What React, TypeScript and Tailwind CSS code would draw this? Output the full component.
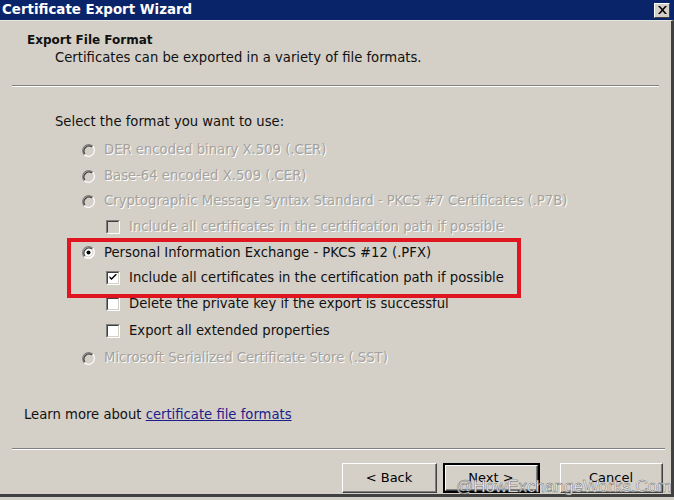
import React from 'react';

const FONT = 'font-["Tahoma","DejaVu_Sans",sans-serif]';

function Radio({ checked = false, disabled = false }: { checked?: boolean; disabled?: boolean }) {
  return (
    <svg width="13" height="13" viewBox="0 0 13 13" className="shrink-0">
      <circle cx="6.5" cy="6.5" r="5.5" fill={disabled ? '#d4d0c8' : '#ffffff'} />
      <path d="M2.26 10.74 A6 6 0 0 1 10.74 2.26" fill="none" stroke="#808080" strokeWidth="1.2" />
      <path d="M10.74 2.26 A6 6 0 0 1 2.26 10.74" fill="none" stroke="#ffffff" strokeWidth="1.2" />
      <path d="M3.0 10.0 A5 5 0 0 1 10.0 3.0" fill="none" stroke="#404040" strokeWidth="1.2" />
      <path d="M10.0 3.0 A5 5 0 0 1 3.0 10.0" fill="none" stroke="#d4d0c8" strokeWidth="1" />
      {checked && <circle cx="6.5" cy="6.5" r="2" fill="#000000" />}
    </svg>
  );
}

function Checkbox({ checked = false, disabled = false }: { checked?: boolean; disabled?: boolean }) {
  return (
    <div className="w-[14px] h-[14px] shrink-0 border-t border-l border-t-[#808080] border-l-[#808080] border-b border-r border-b-white border-r-white">
      <div
        className={`w-full h-full border-t border-l border-t-[#404040] border-l-[#404040] border-b border-r border-b-[#d4d0c8] border-r-[#d4d0c8] flex items-center justify-center ${
          disabled ? 'bg-[#d4d0c8]' : 'bg-white'
        }`}
      >
        {checked && (
          <svg width="8" height="7" viewBox="0 0 7 7">
            <path d="M0 2 L0 4 L2 6 L7 1 L7 -1 L2 4 Z" fill="#000000" />
          </svg>
        )}
      </div>
    </div>
  );
}

function Button({ label, isDefault = false }: { label: string; isDefault?: boolean }) {
  return (
    <div className={`h-[30px] ${isDefault ? 'border-2 border-black' : ''}`}>
      <div className="h-full border-t border-l border-t-white border-l-white border-b border-r border-b-[#404040] border-r-[#404040]">
        <div className="h-full flex items-center justify-center border-b border-r border-b-[#808080] border-r-[#808080] text-[13px] text-black">
          {label}
        </div>
      </div>
    </div>
  );
}

const disabledText = 'text-[#a4a29d] [text-shadow:1px_1px_0_#ffffff]';

export default function App() {
  return (
    <div className={`w-[674px] h-[500px] bg-[#d4d0c8] relative overflow-hidden ${FONT}`}>
      {/* Title bar */}
      <div className="h-[20px] bg-[#0a246a] flex items-center justify-between pl-[2px] pr-[4px]">
        <span className="text-white font-bold text-[13.4px] leading-none">Certificate Export Wizard</span>
        <div className="w-[16px] h-[15px] bg-[#d4d0c8] border-t border-l border-t-white border-l-white border-b border-r border-b-[#404040] border-r-[#404040] flex items-center justify-center">
          <svg width="9" height="8" viewBox="0 0 9 8">
            <path d="M0 0 L2 0 L4.5 2.7 L7 0 L9 0 L5.5 4 L9 8 L7 8 L4.5 5.3 L2 8 L0 8 L3.5 4 Z" fill="#000000" />
          </svg>
        </div>
      </div>

      {/* Window body */}
      <div className="h-[477px] border-r-[3px] border-r-[#404040] border-b-[3px] border-b-[#404040] border-t border-t-[#e8e6e0]">
        {/* Header */}
        <div className="pt-[11px] pl-[27px] text-[13.2px] leading-[16px] text-[#111]">
          <div className="font-bold text-[12px]">Export File Format</div>
          <div className="pl-[28px] pt-[2px]">Certificates can be exported in a variety of file formats.</div>
        </div>
        <div className="mx-[12px] mt-[19px] border-t border-t-[#808080] border-b border-b-white" />

        {/* Content */}
        <div className="pl-[55px] text-[13.2px] text-[#111]">
          <div className="mt-[27px] leading-[16px]">Select the format you want to use:</div>

          <div className="mt-[7px] pl-[27px]">
            <div className="h-[26px] flex items-center gap-[9px]">
              <Radio disabled />
              <span className={disabledText}>DER encoded binary X.509 (.CER)</span>
            </div>
            <div className="h-[26px] flex items-center gap-[9px]">
              <Radio disabled />
              <span className={disabledText}>Base-64 encoded X.509 (.CER)</span>
            </div>
            <div className="h-[24px] flex items-center gap-[9px]">
              <Radio disabled />
              <span className={disabledText}>Cryptographic Message Syntax Standard - PKCS #7 Certificates (.P7B)</span>
            </div>
            <div className="h-[28px] flex items-center gap-[9px] pl-[24px]">
              <Checkbox disabled />
              <span className={disabledText}>Include all certificates in the certification path if possible</span>
            </div>
            <div className="h-[23px] flex items-center gap-[9px]">
              <Radio checked />
              <span>Personal Information Exchange - PKCS #12 (.PFX)</span>
            </div>
            <div className="h-[27px] flex items-center gap-[9px] pl-[24px]">
              <Checkbox checked />
              <span>Include all certificates in the certification path if possible</span>
            </div>
            <div className="h-[26px] flex items-center gap-[9px] pl-[24px]">
              <Checkbox />
              <span>Delete the private key if the export is successful</span>
            </div>
            <div className="h-[28px] flex items-center gap-[9px] pl-[24px]">
              <Checkbox />
              <span>Export all extended properties</span>
            </div>
            <div className="h-[26px] flex items-center gap-[9px]">
              <Radio disabled />
              <span className={disabledText}>Microsoft Serialized Certificate Store (.SST)</span>
            </div>
          </div>
        </div>

        <div className="mt-[36px] pl-[24px] text-[13.2px] leading-[16px] text-[#111]">
          Learn more about{' '}
          <span className="text-[#1c1c8a] underline">certificate file formats</span>
        </div>

        <div className="ml-[12px] mr-[6px] mt-[25px] border-t border-t-[#808080] border-b border-b-white" />

        {/* Buttons */}
        <div className="mt-[13px] flex pl-[342px]">
          <div className="w-[95px]">
            <Button label="< Back" />
          </div>
          <div className="w-[97px] ml-[6px]">
            <Button label="Next >" isDefault />
          </div>
          <div className="w-[103px] ml-[20px]">
            <Button label="Cancel" />
          </div>
        </div>
      </div>

      {/* Red annotation box */}
      <div className="absolute left-[67px] top-[238px] w-[454px] h-[60px] border-4 border-[#e1151f]" />

      {/* Watermark */}
      <div className='absolute left-[456px] top-[477px] w-[212px] whitespace-nowrap text-[17px] leading-[20px] text-white font-["Liberation_Sans",Arial,sans-serif] [-webkit-text-stroke:0.5px_#6a6a6a]'>
        @HowExchangeWorks.Com
      </div>
    </div>
  );
}
